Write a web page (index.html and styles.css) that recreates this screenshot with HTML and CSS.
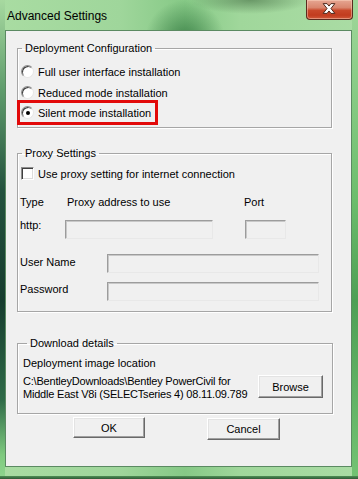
FILE: index.html
```html
<!DOCTYPE html>
<html>
<head>
<meta charset="utf-8">
<link rel="stylesheet" href="styles.css">
</head>
<body>
<div class="window">
  <div class="titlebar">
    <span class="title">Advanced Settings</span>
    <span class="close">
      <svg width="47" height="20" viewBox="0 0 47 20">
        <path d="M17.5 4.5 L21.5 4.5 L23.5 7 L25.5 4.5 L29.5 4.5 L25.5 9.5 L29.5 14.5 L25.5 14.5 L23.5 12 L21.5 14.5 L17.5 14.5 L21.5 9.5 Z" fill="#fff" stroke="#4a2418" stroke-width="1" stroke-linejoin="round"/>
      </svg>
    </span>
  </div>
  <div class="client">
    <fieldset class="group g1">
      <legend>Deployment Configuration</legend>
      <div class="row opt"><span class="radio"></span>Full user interface installation</div>
      <div class="row opt"><span class="radio"></span>Reduced mode installation</div>
      <div class="row opt mark"><span class="radio on"></span>Silent mode installation</div>
    </fieldset>

    <fieldset class="group g2">
      <legend>Proxy Settings</legend>
      <div class="row opt"><span class="check"></span>Use proxy setting for internet connection</div>
      <div class="grid3 hdr">
        <span class="c1">Type</span>
        <span class="c2">Proxy address to use</span>
        <span class="c3">Port</span>
      </div>
      <div class="grid3 http">
        <span class="c1 lbl">http:</span>
        <span class="field f-addr"></span>
        <span class="field f-port"></span>
      </div>
      <div class="cred user">
        <span class="lbl">User Name</span>
        <span class="field f-cred"></span>
      </div>
      <div class="cred pass">
        <span class="lbl">Password</span>
        <span class="field f-cred"></span>
      </div>
    </fieldset>

    <fieldset class="group g3">
      <legend>Download details</legend>
      <div class="desc">Deployment image location</div>
      <div class="pathrow">
        <div class="path">C:\BentleyDownloads\Bentley PowerCivil for<br>Middle East V8i (SELECTseries 4) 08.11.09.789</div>
        <span class="btn browse">Browse</span>
      </div>
    </fieldset>

    <div class="actions">
      <span class="btn ok">OK</span>
      <span class="btn cancel">Cancel</span>
    </div>
  </div>
</div>
</body>
</html>
```
FILE: styles.css
```css
html, body {
  margin: 0;
  padding: 0;
}
body {
  width: 358px;
  height: 479px;
  overflow: hidden;
  font-family: "Liberation Sans", Arial, sans-serif;
  font-size: 11px;
  color: #000;
}
.window {
  width: 358px;
  height: 479px;
  box-sizing: border-box;
  display: flex;
  flex-direction: column;
  background:
    linear-gradient(to bottom, #a7d9a0 0, #5f9c6c 90px, #24523e 190px, #163c2e 300px, #2f6b48 400px, #7fca7f 455px, #8fd58f 479px) left top / 5px 100% no-repeat,
    linear-gradient(to bottom, #9fd79a 0, #6cbd6c 200px, #4e9f55 300px, #73c373 479px) right top / 6px 100% no-repeat,
    radial-gradient(ellipse 40px 40px at 185px 40px, rgba(40,110,55,0.75), rgba(40,110,55,0) 100%),
    radial-gradient(ellipse 60px 14px at 250px 0px, rgba(60,100,60,0.55), rgba(60,100,60,0) 100%),
    linear-gradient(to right, #a9dca2 0, #9fd69b 120px, #86c986 185px, #a0d79b 240px, #aadca4 358px);
  position: relative;
}
.window::after {
  content: "";
  position: absolute;
  left: 0;
  right: 0;
  bottom: 0;
  height: 3px;
  background: linear-gradient(to bottom, #4f8f55, #2f5a36);
}
.titlebar {
  height: 30px;
  display: flex;
  align-items: flex-start;
  flex: none;
}
.title {
  margin-left: 7px;
  margin-top: 9px;
  line-height: 14px;
  font-size: 12px;
  color: #000;
}
.close {
  margin-left: auto;
  margin-right: 5px;
  width: 47px;
  height: 20px;
  box-sizing: border-box;
  border: 1px solid #5b2b1e;
  border-top: none;
  border-radius: 0 0 4px 4px;
  background: linear-gradient(to bottom, #e6a692 0, #d9866e 40%, #c9482a 55%, #c23c1f 80%, #d0583a 100%);
  box-shadow: inset 0 0 0 1px rgba(255,220,200,0.45);
  display: flex;
}
.close svg {
  margin: -1px 0 0 -1px;
}
.client {
  margin: 0 6px 0 5px;
  height: 437px;
  box-sizing: border-box;
  background: #f0f0f0;
  border: 1px solid #5b8a62;
  display: flex;
  flex-direction: column;
  flex: none;
}
.group {
  margin: 0 0 0 11px;
  width: 315px;
  box-sizing: border-box;
  padding: 0;
  border: 1px solid #a6a6a6;
  box-shadow: inset 1px 1px 0 #fff, 1px 1px 0 #fff;
  min-width: 0;
}
.group legend {
  margin-left: 4px;
  padding: 0 3px;
  line-height: 13px;
  height: 13px;
}
.g1 {
  margin-top: 11px;
  padding-top: 6px;
  padding-bottom: 2px;
}
.row {
  height: 21px;
  display: flex;
  align-items: center;
  padding-left: 3px;
}
.row.mark {
  margin: -3px 0 0 -1px;
  height: 19px;
  width: 134px;
  padding-left: 1px;
  border: 3px solid #e20a0a;
}
.radio {
  width: 13px;
  height: 13px;
  box-sizing: border-box;
  border-radius: 50%;
  background: #fff;
  border: 1px solid;
  border-color: #8d8d8d #e6e6e6 #e6e6e6 #8d8d8d;
  box-shadow: inset 1px 1px 0 #3e3e3e;
  margin-right: 4px;
  flex: none;
  display: flex;
  align-items: center;
  justify-content: center;
}
.radio.on::after {
  content: "";
  width: 4px;
  height: 4px;
  border-radius: 50%;
  background: #000;
  margin: 1px 0 0 1px;
}
.check {
  width: 13px;
  height: 13px;
  box-sizing: border-box;
  background: #fff;
  border: 1px solid;
  border-color: #8d8d8d #fff #fff #8d8d8d;
  box-shadow: inset 1px 1px 0 #404040, inset -1px -1px 0 #dcdcdc;
  margin-right: 4px;
  flex: none;
}
.g2 {
  margin-top: 19px;
  padding-top: 3px;
  padding-bottom: 10px;
}
.grid3 {
  display: grid;
  grid-template-columns: 45px 180px 60px;
  padding-left: 2px;
}
.hdr {
  margin-top: 7px;
  height: 21px;
  align-items: center;
}
.hdr .c2 {
  padding-left: 2px;
}
.hdr .c3 {
  margin-left: -1px;
}
.http {
  margin-top: 7px;
  align-items: start;
}
.lbl {
  line-height: 13px;
}
.field {
  display: block;
  height: 19px;
  box-sizing: border-box;
  background: #f0f0f0;
  border: 1px solid;
  border-color: #9c9c9c #e8e8e8 #e8e8e8 #9c9c9c;
  box-shadow: inset 1px 1px 0 #c8c8c8;
}
.http .field {
  margin-top: 1px;
}
.f-addr {
  width: 148px;
}
.f-port {
  width: 41px;
}
.cred {
  display: flex;
  align-items: flex-start;
  padding-left: 2px;
}
.cred .lbl {
  width: 87px;
  margin-top: 2px;
}
.user {
  margin-top: 15px;
}
.pass {
  margin-top: 9px;
}
.pass .lbl {
  margin-top: 1px;
}
.f-cred {
  width: 212px;
}
.g3 {
  margin-top: 25px;
  width: 316px;
  padding-left: 5px;
  padding-bottom: 12px;
}
.desc {
  margin-top: 7px;
  line-height: 13px;
}
.pathrow {
  margin-top: 5px;
  display: flex;
  align-items: flex-start;
}
.path {
  line-height: 13px;
  width: 235px;
  white-space: nowrap;
  letter-spacing: -0.2px;
}
.btn {
  display: flex;
  align-items: center;
  justify-content: center;
  box-sizing: border-box;
  background: #f0f0f0;
  border: 1px solid;
  border-color: #fff #696969 #696969 #fff;
  box-shadow: inset -1px -1px 0 #a0a0a0, inset 1px 1px 0 #e3e3e3;
  flex: none;
}
.browse {
  width: 65px;
  height: 23px;
}
.actions {
  display: flex;
  margin-top: 3px;
  padding-left: 67px;
}
.ok {
  width: 72px;
  height: 21px;
}
.cancel {
  width: 73px;
  height: 22px;
  margin-top: 1px;
  margin-left: 62px;
}
```
